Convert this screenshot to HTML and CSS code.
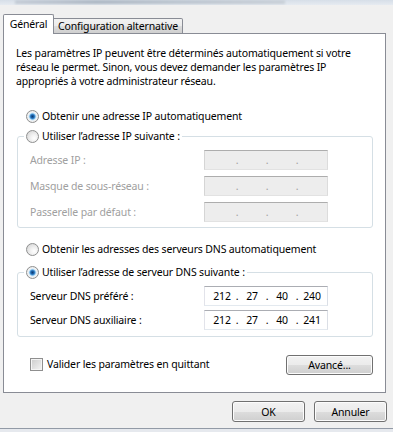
FILE: index.html
```html
<!DOCTYPE html>
<html lang="fr">
<head>
    <meta charset="UTF-8">
    <meta name="viewport" content="width=device-width, initial-scale=1.0">
    <title>Propriétés de : Protocole Internet version 4 (TCP/IPv4)</title>
    <link rel="stylesheet" href="styles.css">
</head>
<body>
    <div class="titlebar"><span class="titlebar-blur"></span></div>

    <div class="tabs">
        <div class="tab tab-active">Général</div>
        <div class="tab tab-idle">Configuration alternative</div>
    </div>

    <div class="panel">
        <p class="intro">Les paramètres IP peuvent être déterminés automatiquement si votre<br>réseau le permet. Sinon, vous devez demander les paramètres IP<br>appropriés à votre administrateur réseau.</p>

        <div class="option option-ip-auto"><span class="radio checked"></span>Obtenir une adresse IP automatiquement</div>

        <fieldset class="group group-ip">
            <legend class="option"><span class="radio"></span>Utiliser l’adresse IP suivante :</legend>
            <div class="field field-disabled">
                <span class="field-label">Adresse IP :</span>
                <span class="ip"><span class="seg"></span><span class="dot">.</span><span class="seg"></span><span class="dot">.</span><span class="seg"></span><span class="dot">.</span><span class="seg"></span></span>
            </div>
            <div class="field field-disabled">
                <span class="field-label">Masque de sous-réseau :</span>
                <span class="ip"><span class="seg"></span><span class="dot">.</span><span class="seg"></span><span class="dot">.</span><span class="seg"></span><span class="dot">.</span><span class="seg"></span></span>
            </div>
            <div class="field field-disabled">
                <span class="field-label">Passerelle par défaut :</span>
                <span class="ip"><span class="seg"></span><span class="dot">.</span><span class="seg"></span><span class="dot">.</span><span class="seg"></span><span class="dot">.</span><span class="seg"></span></span>
            </div>
        </fieldset>

        <div class="option option-dns-auto"><span class="radio"></span>Obtenir les adresses des serveurs DNS automatiquement</div>

        <fieldset class="group group-dns">
            <legend class="option"><span class="radio checked"></span>Utiliser l’adresse de serveur DNS suivante :</legend>
            <div class="field">
                <span class="field-label">Serveur DNS préféré :</span>
                <span class="ip"><span class="seg">212</span><span class="dot">.</span><span class="seg">27</span><span class="dot">.</span><span class="seg">40</span><span class="dot">.</span><span class="seg">240</span></span>
            </div>
            <div class="field">
                <span class="field-label">Serveur DNS auxiliaire :</span>
                <span class="ip"><span class="seg">212</span><span class="dot">.</span><span class="seg">27</span><span class="dot">.</span><span class="seg">40</span><span class="dot">.</span><span class="seg">241</span></span>
            </div>
        </fieldset>

        <div class="panel-footer">
            <div class="check-row"><span class="checkbox"></span>Valider les paramètres en quittant</div>
            <button class="btn btn-advanced">Avancé...</button>
        </div>
    </div>

    <div class="dialog-buttons">
        <button class="btn">OK</button>
        <button class="btn">Annuler</button>
    </div>
    <div class="window-edge"></div>
</body>
</html>
```

FILE: styles.css
```css
body { margin: 0; background: #f0f0f0; font-family: "Noto Sans", "Open Sans", sans-serif; font-size: 10.5px; letter-spacing: -0.15px; color: #000; width: 393px; height: 432px; overflow: hidden; }

.titlebar { height: 5px; background: linear-gradient(to bottom, #d6dee8, #e6ebf1); overflow: hidden; }
.titlebar-blur { display: block; margin-left: 15px; width: 270px; height: 4px; background: linear-gradient(to right, #c4ccd6, #aeb8c4 30%, #bcc5cf 60%, #c9d0d8); filter: blur(1px); }

.tabs { display: flex; align-items: flex-end; margin: 9px 0 -1px 3px; position: relative; z-index: 1; }
.tab { box-sizing: border-box; border: 1px solid #898c95; text-align: center; white-space: nowrap; }
.tab-active { width: 51px; height: 20px; border-bottom: none; background: #fff; line-height: 18px; border-radius: 2px 2px 0 0; }
.tab-idle { width: 129px; height: 16px; border-left: none; line-height: 15px; background: linear-gradient(to bottom, #f2f2f2 0%, #ebebeb 50%, #dddddd 51%, #cfcfcf 100%); border-radius: 0 2px 0 0; }

.panel { box-sizing: border-box; height: 360px; margin: 0 7px 0 3px; padding: 12px 12px 0 12px; background: #fff; border: 1px solid #898c95; }
.intro { margin: 0; line-height: 14px; white-space: nowrap; }

.option { display: flex; align-items: center; height: 20px; white-space: nowrap; }
.option-ip-auto { margin: 18px 0 0 10px; }
.option-dns-auto { margin: 11px 0 0 10px; }

.radio { box-sizing: border-box; width: 13px; height: 13px; margin-right: 3px; border-radius: 50%; border: 1px solid #8e8f8f; background: radial-gradient(circle at 65% 65%, #ffffff 0%, #f1f1f1 35%, #cfcfcf 100%); }
.radio.checked { background: radial-gradient(circle at 50% 50%, #0c3b70 0%, #2067b0 22%, #5aa7e0 34%, #cde6f7 45%, #f4f4f4 58%, #d8d8d8 100%); }

.group { margin: 0 0 0 1px; padding: 0 0 5px 12px; border: 1px solid #d5dfe5; border-radius: 3px; }
.group legend { padding: 0 2px; margin-left: -6px; height: 20px; }
.group-ip { margin-top: 0; }
.group-dns { margin-top: 3px; padding-bottom: 6px; }

.field { display: flex; align-items: center; height: 20px; margin-top: 6px; }
.group-ip .field:first-of-type { margin-top: 4px; }
.group-dns .field { margin-top: 4px; }
.field-label { width: 174px; }
.field-disabled .field-label { color: #a0a0a0; }

.ip { box-sizing: border-box; display: flex; align-items: center; width: 124px; height: 20px; padding: 0 3px 0 5px; background: #fff; border: 1px solid; border-color: #abadb3 #dbdfe6 #e3e9ef #e2e3ea; }
.field-disabled .ip { background: #ededed; border-color: #adadad #dcdcdc #e2e2e2 #d5d5d5; color: #a0a0a0; }
.seg { width: 24px; text-align: center; }
.dot { width: 6px; text-align: center; }

.panel-footer { display: flex; justify-content: space-between; align-items: center; margin-top: 18px; padding-left: 14px; }
.check-row { display: flex; align-items: center; margin-top: -2px; }
.checkbox { box-sizing: border-box; width: 13px; height: 13px; margin-right: 4px; border: 1px solid #8f8f8f; background: linear-gradient(135deg, #cbcbcb, #f4f4f4); box-shadow: inset 0 0 0 1px #f4f4f4; }

.btn { box-sizing: border-box; width: 73px; height: 21px; padding: 0; font: inherit; letter-spacing: inherit; color: #000; border: 1px solid #707070; border-radius: 3px; background: linear-gradient(to bottom, #f2f2f2 0%, #ebebeb 50%, #dddddd 51%, #cfcfcf 100%); box-shadow: inset 0 0 0 1px #fcfcfc; }
.btn-advanced { width: 87px; height: 20px; }

.dialog-buttons { display: flex; justify-content: flex-end; gap: 9px; margin-top: 8px; padding-right: 6px; }
.window-edge { margin-top: 6px; height: 1px; background: #929aa6; border-bottom: 3px solid #e6e9ee; }
```
